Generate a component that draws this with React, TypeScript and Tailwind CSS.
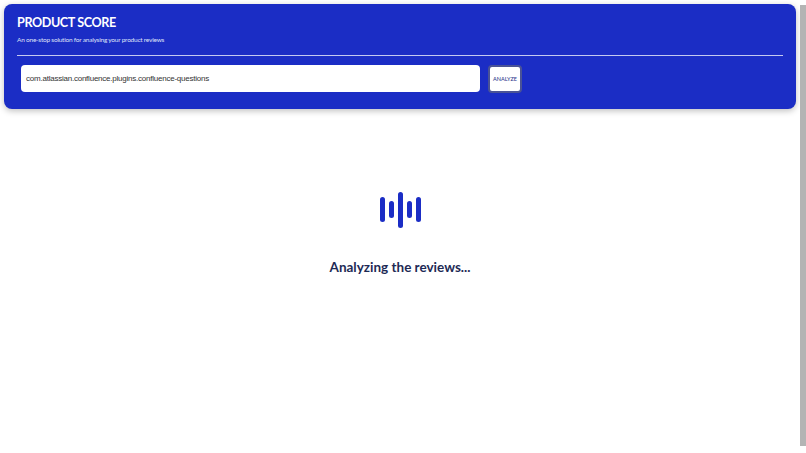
const bars = ["h-[25px]", "h-[17px]", "h-[36px]", "h-[17px]", "h-[25px]"];

const App = () => {
  return (
    <div className="flex h-[453px] w-[806px] overflow-hidden bg-white font-['Lato',sans-serif]">
      <div className="flex min-w-0 flex-1 flex-col">
        {/* Header */}
        <div className="mx-1 mt-1 h-[105px] rounded-lg bg-[#1b2dc5] px-[13px] pt-[11px] shadow-[0_2px_6px_rgba(0,0,0,0.25)]">
          <h1 className="text-[12.6px] leading-[16px] font-bold tracking-[-0.4px] text-white">PRODUCT SCORE</h1>
          <p className="mt-[4px] text-[6.5px] leading-[9px] tracking-[-0.22px] text-[#dfe2f8]">
            An one-stop solution for analysing your product reviews
          </p>
          <div className="mt-[11px] h-px bg-[#c5caf0]" />
          <div className="mt-[9px] flex items-start gap-[8px] pl-[4px]">
            <div className="flex h-[27px] w-[459px] items-center rounded-[4px] bg-white px-[5px] font-['Liberation_Sans',sans-serif] text-[8px] tracking-[-0.23px] text-[#333333]">
              com.atlassian.confluence.plugins.confluence-questions
            </div>
            <button className="flex h-[28px] w-[34px] items-center justify-center rounded-[4px] border-2 border-[#4a5396] bg-white text-[5.5px] font-medium text-[#2a3a8c]">
              ANALYZE
            </button>
          </div>
        </div>

        {/* Loading */}
        <div className="flex flex-col items-center pt-[82px]">
          <div className="flex h-[37px] items-center gap-[4px]">
            {bars.map((h, i) => (
              <div key={i} className={`w-[5px] rounded-full bg-[#1b2dc5] ${h}`} />
            ))}
          </div>
          <p className="mt-[31px] text-[13.5px] leading-[16px] font-bold text-[#1e2a55]">
            Analyzing the reviews...
          </p>
        </div>
      </div>

      {/* Scrollbar */}
      <div className="flex w-[6px] flex-col bg-white">
        <div className="h-[5px]" />
        <div className="flex-1 bg-[#b4b4b4]" />
        <div className="h-[7px]" />
      </div>
    </div>
  );
};

export default App;
